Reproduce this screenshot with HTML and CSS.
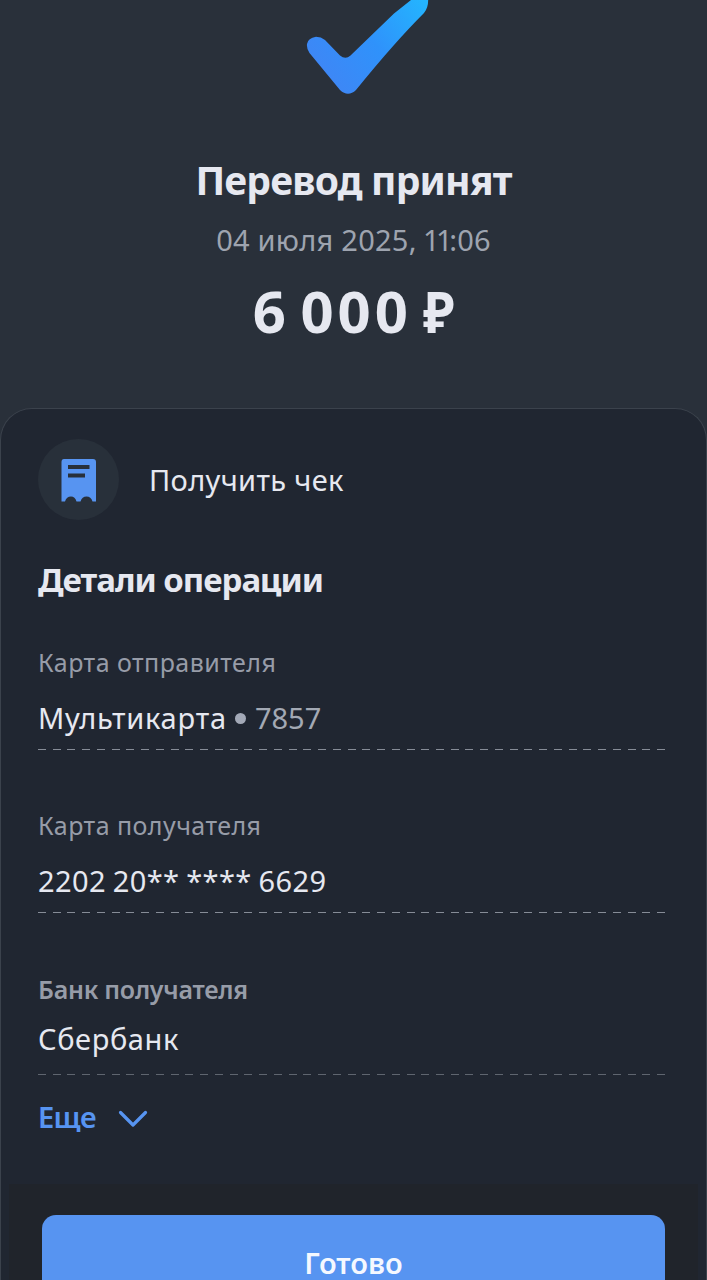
FILE: index.html
```
<!DOCTYPE html>
<html lang="ru">
<head>
    <meta charset="UTF-8">
    <meta name="viewport" content="width=device-width, initial-scale=1.0">
    <title>Перевод принят</title>
    <link rel="stylesheet" href="styles.css">
</head>
<body>
    <header class="status">
        <svg class="check" width="130" height="100" viewBox="0 0 130 100">
            <defs>
                <linearGradient id="check-fill" x1="20" y1="80" x2="120" y2="0" gradientUnits="userSpaceOnUse">
                    <stop offset="0" stop-color="#3f86f5"/>
                    <stop offset="0.5" stop-color="#2f92fb"/>
                    <stop offset="1" stop-color="#24b4fe"/>
                </linearGradient>
            </defs>
            <path fill="url(#check-fill)" d="M7.500 53 Q4.500 49 5 44 Q6 38 14 36.800 Q19 36.800 23 40 L38 55.500 Q43.500 60 48.500 55.500 L92 13.500 L109 0 L109 -3 L126 -3 Q127 7 122 13 Q92 43 54 90 Q46 97.500 38 90 Z"/>
        </svg>
        <h1 class="title">Перевод принят</h1>
        <p class="date">04 июля 2025, <span class="narrow">11</span>:06</p>
        <p class="amount">6 000 <span class="ruble">₽</span></p>
    </header>

    <main class="card">
        <div class="receipt">
            <span class="receipt-icon">
                <svg width="36" height="44" viewBox="0 0 36 44">
                    <path fill="#5794f1" d="M3 1 H32 Q35 1 35 4 V43.500 H31.500 Q30 38.500 25.500 38.500 Q21 38.500 19.500 43.500 H15.500 Q14 38.500 10 38.500 Q5.500 38.500 4 43.500 H0.500 V4 Q0.500 1 3 1 Z"/>
                    <path stroke="#28303a" stroke-width="4" d="M7 9 H28.500 M7 17.500 H24"/>
                </svg>
            </span>
            <span class="receipt-text">Получить чек</span>
        </div>

        <h2 class="subtitle">Детали операции</h2>

        <div class="field">
            <div class="label">Карта отправителя</div>
            <div class="value"><span class="card-name">Мультикарта</span><span class="dot"></span><span class="muted">7857</span></div>
        </div>
        <div class="field">
            <div class="label">Карта получателя</div>
            <div class="value"><span class="number">2202 20** **** 6629</span></div>
        </div>
        <div class="field field-bank">
            <div class="label label-bank">Банк получателя</div>
            <div class="value"><span class="bank">Сбербанк</span></div>
        </div>

        <div class="more">
            <span>Еще</span>
            <svg width="30" height="18" viewBox="0 0 30 18">
                <path fill="none" stroke="#5794f1" stroke-width="3.2" stroke-linecap="round" stroke-linejoin="round" d="M2.500 2.500 L15 15 L27.500 2.500"/>
            </svg>
        </div>

        <footer class="footer">
            <button class="done">Готово</button>
        </footer>
    </main>
</body>
</html>
```
FILE: styles.css
```
* {
    box-sizing: border-box;
}
body {
    margin: 0;
    height: 1280px;
    overflow: hidden;
    background: #29303a;
    color: #e6e8f0;
    font-family: "Noto Sans", sans-serif;
    font-size: 29px;
    line-height: 40px;
}
.status {
    height: 408px;
    display: flex;
    flex-direction: column;
    align-items: center;
}
.check {
    display: block;
    margin-left: 27px;
}
.title {
    margin: 56px 0 0;
    font-size: 39px;
    line-height: 48px;
    font-weight: 700;
    letter-spacing: -0.8px;
}
.date {
    margin: 16px 0 0;
    color: #9ea4af;
    letter-spacing: 0.25px;
}
.narrow {
    margin-left: -1.5px;
    letter-spacing: -3.5px;
}
.amount {
    margin: 16px 0 0 3px;
    font-size: 58px;
    line-height: 70px;
    font-weight: 700;
    letter-spacing: 4px;
    word-spacing: -8.5px;
}
.ruble {
    display: inline-block;
    letter-spacing: 0;
    transform: scaleX(0.9);
    transform-origin: left;
}
.card {
    height: 900px;
    border: 1px solid #3b424c;
    border-bottom: 0;
    border-radius: 32px 32px 0 0;
    background: #202631;
    padding-top: 30px;
}
.receipt {
    display: flex;
    align-items: center;
    gap: 30px;
    margin-left: 37px;
}
.receipt-icon {
    width: 81px;
    height: 81px;
    border-radius: 50%;
    background: #28303a;
    display: flex;
    align-items: center;
    justify-content: center;
}
.receipt-icon svg {
    display: block;
}
.receipt-text {
    letter-spacing: 0.35px;
}
.subtitle {
    margin: 40px 37px 45px;
    font-size: 33px;
    line-height: 40px;
    font-weight: 700;
    letter-spacing: -1px;
}
.field {
    width: 627px;
    height: 105px;
    margin: 0 0 58px 37px;
    background: repeating-linear-gradient(to right, #868c97 0 8px, transparent 8px 14.74px) left bottom / 100% 1px no-repeat;
}
.label {
    font-size: 25px;
    line-height: 34px;
    letter-spacing: 0.45px;
    color: #979ca8;
}
.value {
    display: flex;
    align-items: center;
    margin-top: 19px;
}
.card-name {
    letter-spacing: 0.8px;
}
.number {
    letter-spacing: 0.4px;
    word-spacing: -1.2px;
}
.bank {
    letter-spacing: 0.6px;
}
.dot {
    width: 11px;
    height: 11px;
    margin: 0 9px 0 8px;
    border-radius: 50%;
    background: #a3a9b7;
}
.muted {
    color: #a3a9b4;
}
.field-bank {
    height: 103px;
    margin: 59px 0 0 37px;
    background-image: repeating-linear-gradient(to right, #5f656f 0 8px, transparent 8px 14.74px);
}
.field-bank .value {
    margin-top: 13px;
}
.label-bank {
    font-weight: 600;
    letter-spacing: -0.25px;
}
.more {
    display: flex;
    align-items: center;
    gap: 22px;
    margin: 22px 0 0 37px;
    color: #5794f1;
    font-weight: 600;
    letter-spacing: -0.6px;
}
.more svg {
    margin-top: 4px;
}
.footer {
    margin: 47px 8px 0;
    height: 96px;
    padding: 31px 33px 0 33px;
    background: #20242b;
}
.done {
    display: block;
    width: 100%;
    height: 96px;
    border: 0;
    border-radius: 14px;
    padding: 0;
    background: #5794f1;
    color: #f5f8ff;
    font: 600 29px/40px "Noto Sans", sans-serif;
}
```
